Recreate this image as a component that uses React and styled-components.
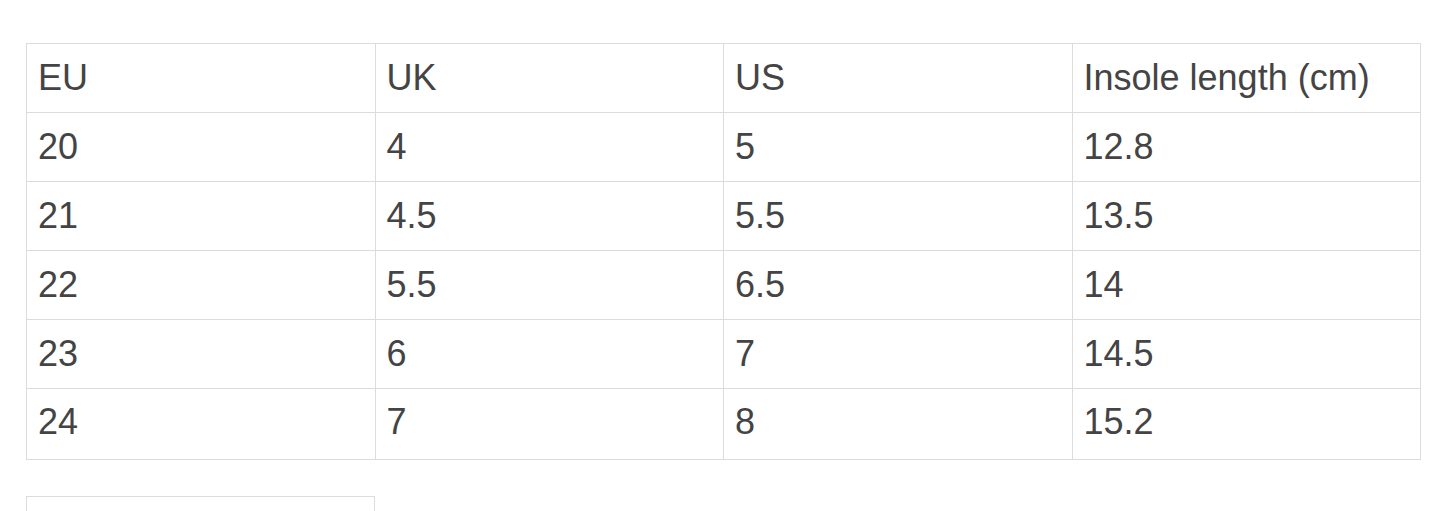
import React from 'react';
import styled, { createGlobalStyle } from 'styled-components';

const GlobalStyle = createGlobalStyle`
	body {
		margin: 0;
		background: #fff;
		font-family: 'Liberation Sans', Arial, sans-serif;
		color: #444;
	}
`;

const Page = styled.div`
	padding: 43px 24px 0 26px;
	display: flex;
	flex-direction: column;
	gap: 36px;
`;

const Table = styled.table`
	border-collapse: collapse;
	table-layout: fixed;
	width: ${(p) => p.width || '1395px'};
`;

const Cell = styled.td`
	border: 1px solid #dcdcdc;
	height: ${(p) => (p.last ? '71px' : '69px')};
	padding: 0 11px;
	padding-bottom: ${(p) => (p.last ? '4px' : '0')};
	font-size: 36px;
	line-height: 1;
	vertical-align: middle;
	color: #444;
	white-space: nowrap;
	box-sizing: border-box;
`;

const rows = [
	['EU', 'UK', 'US', 'Insole length (cm)'],
	['20', '4', '5', '12.8'],
	['21', '4.5', '5.5', '13.5'],
	['22', '5.5', '6.5', '14'],
	['23', '6', '7', '14.5'],
	['24', '7', '8', '15.2'],
];

const App = () => {
	return (
		<>
			<GlobalStyle />
			<Page>
				<Table>
					<tbody>
						{rows.map((r, i) => (
							<tr key={i}>
								{r.map((c, j) => (
									<Cell key={j} last={i === rows.length - 1}>
										{c}
									</Cell>
								))}
							</tr>
						))}
					</tbody>
				</Table>
				<Table width="349px">
					<tbody>
						<tr>
							<Cell>&nbsp;</Cell>
						</tr>
					</tbody>
				</Table>
			</Page>
		</>
	);
};

export default App;
